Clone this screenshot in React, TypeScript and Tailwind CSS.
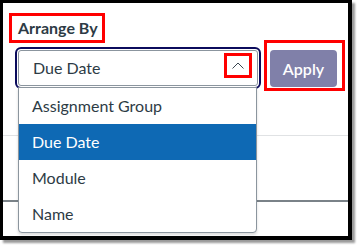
import React from 'react';

const options = ['Assignment Group', 'Due Date', 'Module', 'Name'];

export default function App() {
  const selected = 'Due Date';

  return (
    <div className="w-[361px] h-[249px] bg-white" style={{ fontFamily: 'Lato, "Noto Sans", sans-serif' }}>
      {/* framed screenshot */}
      <div className="relative w-[352px] h-[240px] bg-white border-l-[3px] border-t-[3px] border-r-4 border-b-4 border-black shadow-[3px_3px_2px_#9a9a9a]">
        <div className="flex items-start">
          {/* label + select */}
          <div className="flex flex-col">
            <div className="ml-[6px] mt-[10px] w-[96px] h-[30px] border-[3px] border-[#ff0000] flex items-center pl-[6px]">
              <span className="text-[16px] font-bold text-[#2d3b45] leading-none">Arrange By</span>
            </div>
            <div className="ml-[12px] mt-[4px] w-[246px] h-[42px] rounded-[6px] border-2 border-[#0b0b5c] p-px">
              <div className="h-full rounded-[3px] border border-[#8b959e] flex items-center justify-between pl-[14px] pr-[5px]">
                <span className="text-[16px] text-[#2d3b45]">Due Date</span>
                <div className="shrink-0 self-start mt-[2px] w-[28px] h-[25px] border-[3px] border-[#ff0000] flex items-center justify-center">
                  <svg width="12" height="7" viewBox="0 0 12 7" fill="none">
                    <path d="M0.5 6.5 L6 1 L11.5 6.5" stroke="#3a4650" strokeWidth="1" />
                  </svg>
                </div>
              </div>
            </div>
          </div>

          {/* apply */}
          <div className="ml-[3px] mt-[37px] w-[81px] h-[51px] border-[3px] border-[#ff0000] pl-[3px] pt-[7px]">
            <button className="w-[67px] h-[37px] rounded-[4px] bg-[#8080a9] text-white text-[16px] font-semibold flex items-center justify-center">
              Apply
            </button>
          </div>
        </div>

        {/* page content behind the menu */}
        <div className="mt-[44px] border-b border-[#e0e2e4]" />
        <div className="h-[66px] border-b-2 border-[#7a8288]" />

        {/* open listbox */}
        <ul className="absolute left-[15px] top-[84px] w-[239px] bg-white border border-[#8b959e] rounded-b-[4px] shadow-[0_2px_3px_rgba(0,0,0,0.15)]">
          {options.map((opt) => (
            <li
              key={opt}
              className={
                opt === selected
                  ? 'h-[36px] flex items-center pl-[13px] text-[16px] bg-[#0e69b4] text-white'
                  : 'h-[36px] flex items-center pl-[13px] text-[16px] text-[#2d3b45]'
              }
            >
              {opt}
            </li>
          ))}
        </ul>
      </div>
    </div>
  );
}
